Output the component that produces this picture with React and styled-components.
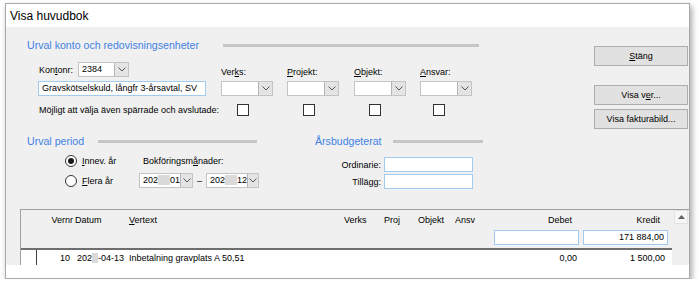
import React from "react"
import styled, { createGlobalStyle } from "styled-components"

const GlobalStyle = createGlobalStyle`
  body {
    margin: 0;
    background: #fff;
    font-family: "Liberation Sans", Arial, sans-serif;
    font-size: 9px;
    color: #000;
  }
  * { box-sizing: border-box; }
`

const BLUE = "#4282e4"

const Window = styled.div`
  width: 685px;
  height: 276px;
  margin: 3px 0 0 5px;
  border: 1px solid #a9a9a9;
  background: #fff;
  box-shadow: 2px 3px 6px rgba(0, 0, 0, 0.35);
  display: flex;
  flex-direction: column;
`

const TitleBar = styled.div`
  height: 23px;
  padding-left: 4px;
  display: flex;
  align-items: center;
  font-size: 12px;
`

const Body = styled.div`
  height: 238px;
  background: #f0f0f0;
  display: flex;
  flex-direction: column;
`

const TopArea = styled.div`
  display: flex;
  padding: 10px 1px 0 21px;
`

const LeftPanel = styled.div`
  display: flex;
  flex-direction: column;
`

const Heading = styled.div`
  display: grid;
  grid-template-columns: ${(p) => p.$title}px ${(p) => p.$rule}px;
  align-items: center;
  height: 16px;
`

const HeadingText = styled.span`
  color: ${BLUE};
  font-size: 10.6px;
  white-space: nowrap;
`

const Rule = styled.div`
  height: 3px;
  background: #c6c6c6;
`

const FormGrid = styled.div`
  display: grid;
  grid-template-columns: 183px 66px 67px 66px 52px;
  grid-template-rows: 19px 22px 14px;
  align-items: start;
  margin: 9px 0 0 11px;
`

const Field = styled.div`
  display: flex;
  align-items: center;
  height: 15px;
  white-space: nowrap;
`

const FieldLabel = styled.span`
  width: ${(p) => p.$w}px;
  padding-left: 1px;
`

const ColLabel = styled.span`
  align-self: center;
  white-space: nowrap;
`

const Combo = styled.div`
  display: flex;
  width: ${(p) => p.$w}px;
  height: 15px;
  border: 1px solid #c4c4c4;
  background: #fff;
`

const ComboText = styled.span`
  flex: 1;
  padding-left: 3px;
  line-height: 13px;
  white-space: nowrap;
`

const ComboButton = styled.span`
  width: 14px;
  background: #e4e4e4;
  border-left: 1px solid #b4b4b4;
  display: flex;
  align-items: center;
  justify-content: center;
`

const TextBox = styled.div`
  width: ${(p) => p.$w}px;
  height: 15px;
  border: 1px solid #a3cbf0;
  background: #fff;
  padding: 0 3px;
  line-height: 13px;
  text-align: ${(p) => (p.$right ? "right" : "left")};
  white-space: nowrap;
`

const CheckLabel = styled.span`
  padding-left: 1px;
  white-space: nowrap;
  line-height: 14px;
`

const CheckBox = styled.span`
  display: block;
  width: 12px;
  height: 12px;
  margin: 1px 0 0 ${(p) => p.$x}px;
  border: 1px solid #333;
  background: #fff;
`

const LowerArea = styled.div`
  display: flex;
  margin-top: 16px;
`

const PeriodBlock = styled.div`
  width: 288px;
`

const PeriodGrid = styled.div`
  display: grid;
  grid-template-columns: 74px auto;
  grid-template-rows: 14px 15px;
  row-gap: 5px;
  align-items: center;
  margin: 5px 0 0 38px;
`

const Radio = styled.label`
  display: flex;
  align-items: center;
  gap: 5px;
  white-space: nowrap;
`

const RadioDot = styled.span`
  width: 12px;
  height: 12px;
  border-radius: 50%;
  border: 1px solid #333;
  background: #fff;
  display: flex;
  align-items: center;
  justify-content: center;

  &::after {
    content: "";
    width: 6px;
    height: 6px;
    border-radius: 50%;
    background: ${(p) => (p.$on ? "#1a1a1a" : "transparent")};
  }
`

const MonthLabel = styled.span`
  padding-left: 4px;
  white-space: nowrap;
`

const DateRow = styled.div`
  display: flex;
  align-items: center;
`

const Dash = styled.span`
  width: 13px;
  text-align: center;
`

const Masked = styled.span`
  display: inline-block;
  width: ${(p) => p.$w}px;
  height: 10px;
  background: #dadada;
  vertical-align: -2px;
`

const BudgetGrid = styled.div`
  display: grid;
  grid-template-columns: 66px 89px;
  grid-template-rows: 15px 15px;
  column-gap: 3px;
  row-gap: 2px;
  align-items: center;
  margin-top: 8px;
`

const RightLabel = styled.span`
  text-align: right;
`

const ButtonColumn = styled.div`
  margin: 9px 0 0 auto;
  width: 94px;
  display: flex;
  flex-direction: column;
`

const Button = styled.div`
  height: 20px;
  margin-top: ${(p) => p.$gap || 0}px;
  background: #e1e1e1;
  border: 1px solid #adadad;
  display: flex;
  align-items: center;
  justify-content: center;
  white-space: nowrap;
`

const ListFrame = styled.div`
  flex: 1;
  margin: 20px 0 0 14px;
  border-top: 1px solid #a0a0a0;
  border-left: 1px solid #a0a0a0;
  display: flex;
`

const Table = styled.div`
  flex: 1;
  display: flex;
  flex-direction: column;
`

const HeaderArea = styled.div`
  height: 40px;
  border-bottom: 2px solid #6e6e6e;
`

const cols = "16px 36px 56px 211px 44px 34px 37px 39px 85px 4px 85px"

const ColsRow = styled.div`
  display: grid;
  grid-template-columns: ${cols};
  align-items: center;
  height: ${(p) => p.$h}px;
`

const Cell = styled.span`
  text-align: ${(p) => (p.$right ? "right" : "left")};
  padding-left: ${(p) => p.$pl || 0}px;
  padding-right: ${(p) => p.$pr || 0}px;
  white-space: nowrap;
`

const DataRow = styled(ColsRow)`
  flex: 1;
  background: #fff;
`

const SelCell = styled.span`
  align-self: stretch;
  border-right: 1px solid #404040;
`

const ScrollBar = styled.div`
  width: 17px;
  background: #f0f0f0;
  padding: 0 1px 0 2px;
`

const ScrollUp = styled.div`
  height: 14px;
  background: #f7f7f7;
  border: 1px solid #e2e2e2;
  display: flex;
  align-items: center;
  justify-content: center;
`

const BottomStrip = styled.div`
  height: 12px;
  background: #fff;
`

const Chevron = () => (
  <svg width="8" height="5" viewBox="0 0 8 5">
    <polyline points="0.5,0.5 4,4 7.5,0.5" fill="none" stroke="#555" strokeWidth="1" />
  </svg>
)

const Arrow = () => (
  <svg width="7" height="4" viewBox="0 0 7 4">
    <polygon points="0,4 3.5,0 7,4" fill="#606060" />
  </svg>
)

function ComboBox({ width, children }) {
  return (
    <Combo $w={width}>
      <ComboText>{children}</ComboText>
      <ComboButton>
        <Chevron />
      </ComboButton>
    </Combo>
  )
}

export default function App() {
  return (
    <>
      <GlobalStyle />
      <Window>
        <TitleBar>Visa huvudbok</TitleBar>
        <Body>
          <TopArea>
            <LeftPanel>
              <Heading $title={196} $rule={256}>
                <HeadingText>Urval konto och redovisningsenheter</HeadingText>
                <Rule />
              </Heading>

              <FormGrid>
                <Field>
                  <FieldLabel $w={40}>
                    Kon<u>t</u>onr:
                  </FieldLabel>
                  <ComboBox width={51}>2384</ComboBox>
                </Field>
                <ColLabel>
                  Ver<u>k</u>s:
                </ColLabel>
                <ColLabel>
                  <u>P</u>rojekt:
                </ColLabel>
                <ColLabel>
                  <u>O</u>bjekt:
                </ColLabel>
                <ColLabel>
                  <u>A</u>nsvar:
                </ColLabel>

                <TextBox $w={168}>Gravskötselskuld, långfr 3-årsavtal, SV</TextBox>
                <ComboBox width={52} />
                <ComboBox width={52} />
                <ComboBox width={52} />
                <ComboBox width={52} />

                <CheckLabel>Möjligt att välja även spärrade och avslutade:</CheckLabel>
                <CheckBox $x={16} />
                <CheckBox $x={16} />
                <CheckBox $x={15} />
                <CheckBox $x={13} />
              </FormGrid>

              <LowerArea>
                <PeriodBlock>
                  <Heading $title={71} $rule={159}>
                    <HeadingText>Urval period</HeadingText>
                    <Rule />
                  </Heading>
                  <PeriodGrid>
                    <Radio>
                      <RadioDot $on />
                      <span>
                        <u>I</u>nnev. år
                      </span>
                    </Radio>
                    <MonthLabel>
                      Bokföringsm<u>å</u>nader:
                    </MonthLabel>
                    <Radio>
                      <RadioDot />
                      <span>
                        <u>F</u>lera år
                      </span>
                    </Radio>
                    <DateRow>
                      <ComboBox width={54}>
                        202<Masked $w={12} />01
                      </ComboBox>
                      <Dash>–</Dash>
                      <ComboBox width={53}>
                        202<Masked $w={12} />12
                      </ComboBox>
                    </DateRow>
                  </PeriodGrid>
                </PeriodBlock>

                <div>
                  <Heading $title={78} $rule={90}>
                    <HeadingText>Årsbudgeterat</HeadingText>
                    <Rule />
                  </Heading>
                  <BudgetGrid>
                    <RightLabel>Ordinarie:</RightLabel>
                    <TextBox $w={89} />
                    <RightLabel>Tillägg:</RightLabel>
                    <TextBox $w={89} />
                  </BudgetGrid>
                </div>
              </LowerArea>
            </LeftPanel>

            <ButtonColumn>
              <Button>
                <span>
                  <u>S</u>täng
                </span>
              </Button>
              <Button $gap={19}>
                <span>
                  Visa v<u>e</u>r...
                </span>
              </Button>
              <Button $gap={4}>Visa fakturabild...</Button>
            </ButtonColumn>
          </TopArea>

          <ListFrame>
            <Table>
              <HeaderArea>
                <ColsRow $h={20}>
                  <span />
                  <Cell $right>Vernr</Cell>
                  <Cell $pl={2}>Datum</Cell>
                  <Cell>
                    <u>V</u>ertext
                  </Cell>
                  <Cell $pl={4}>Verks</Cell>
                  <Cell>Proj</Cell>
                  <Cell>Objekt</Cell>
                  <Cell>Ansv</Cell>
                  <Cell $right $pr={7}>
                    Debet
                  </Cell>
                  <span />
                  <Cell $right $pr={8}>
                    Kredit
                  </Cell>
                </ColsRow>
                <ColsRow $h={15}>
                  <span />
                  <span />
                  <span />
                  <span />
                  <span />
                  <span />
                  <span />
                  <span />
                  <TextBox $w={85} />
                  <span />
                  <TextBox $w={85} $right>
                    171 884,00
                  </TextBox>
                </ColsRow>
              </HeaderArea>
              <DataRow>
                <SelCell />
                <Cell $right $pr={3}>
                  10
                </Cell>
                <Cell $pl={4}>
                  202<Masked $w={6} />-04-13
                </Cell>
                <Cell>Inbetalning gravplats A 50,51</Cell>
                <span />
                <span />
                <span />
                <span />
                <Cell $right $pr={2}>
                  0,00
                </Cell>
                <span />
                <Cell $right $pr={3}>
                  1 500,00
                </Cell>
              </DataRow>
            </Table>
            <ScrollBar>
              <ScrollUp>
                <Arrow />
              </ScrollUp>
            </ScrollBar>
          </ListFrame>
        </Body>
        <BottomStrip />
      </Window>
    </>
  )
}
